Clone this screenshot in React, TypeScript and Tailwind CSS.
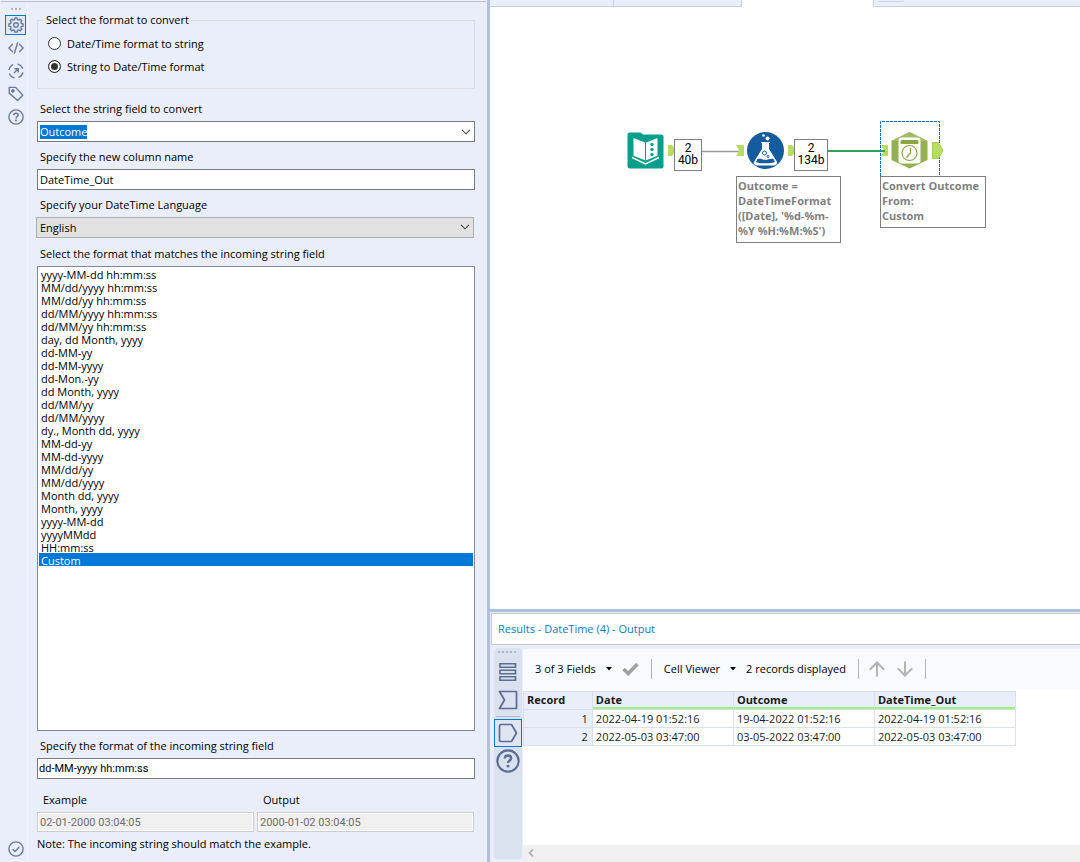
import React from "react";

const FORMATS = [
  "yyyy-MM-dd hh:mm:ss",
  "MM/dd/yyyy hh:mm:ss",
  "MM/dd/yy hh:mm:ss",
  "dd/MM/yyyy hh:mm:ss",
  "dd/MM/yy hh:mm:ss",
  "day, dd Month, yyyy",
  "dd-MM-yy",
  "dd-MM-yyyy",
  "dd-Mon.-yy",
  "dd Month, yyyy",
  "dd/MM/yy",
  "dd/MM/yyyy",
  "dy., Month dd, yyyy",
  "MM-dd-yy",
  "MM-dd-yyyy",
  "MM/dd/yy",
  "MM/dd/yyyy",
  "Month dd, yyyy",
  "Month, yyyy",
  "yyyy-MM-dd",
  "yyyyMMdd",
  "HH:mm:ss",
  "Custom",
];

const COLUMNS = ["Date", "Outcome", "DateTime_Out"];

const RECORDS = [
  ["2022-04-19 01:52:16", "19-04-2022 01:52:16", "2022-04-19 01:52:16"],
  ["2022-05-03 03:47:00", "03-05-2022 03:47:00", "2022-05-03 03:47:00"],
];

// eight teeth, four corners each
const GEAR_POINTS = Array.from({ length: 8 }, (_, i) =>
  [
    [-15, 5.6],
    [-9, 7.2],
    [9, 7.2],
    [15, 5.6],
  ]
    .map(([offset, r]) => {
      const angle = ((i * 45 + offset) * Math.PI) / 180;
      return `${(8 + r * Math.cos(angle)).toFixed(2)},${(8 + r * Math.sin(angle)).toFixed(2)}`;
    })
    .join(" "),
).join(" ");

type IconProps = { children: React.ReactNode; className?: string };

function Icon({ children, className = "size-4" }: IconProps) {
  return (
    <svg
      viewBox="0 0 16 16"
      fill="none"
      stroke="currentColor"
      strokeWidth="1.4"
      aria-hidden="true"
      className={className}
    >
      {children}
    </svg>
  );
}

function HelpIcon({ className }: { className?: string }) {
  return (
    <Icon className={className}>
      <circle cx="8" cy="8" r="7.1" />
      <path d="M5.9 6.3c0-1.2.9-2 2.1-2s2.1.8 2.1 1.9c0 1.5-2.1 1.5-2.1 3.2" strokeWidth="1.6" />
      <path d="M8 10.6v1.6" strokeWidth="1.8" />
    </Icon>
  );
}

function SideButton({
  label,
  active,
  children,
}: {
  label: string;
  active?: boolean;
  children: React.ReactNode;
}) {
  return (
    <button
      type="button"
      aria-label={label}
      className={
        active
          ? "flex h-5 w-[21px] items-center justify-center border border-[#0078d7] bg-[#dfe8f6]"
          : "flex h-5 w-[21px] items-center justify-center"
      }
    >
      {children}
    </button>
  );
}

function SideBar() {
  return (
    <nav className="flex w-7 shrink-0 flex-col items-center gap-[3px] border-r border-[#f3f5fc] pt-[6px] pb-[3px] pl-1 text-[#6b7a99]">
      <svg viewBox="0 0 12 4" aria-hidden="true" className="h-1 w-3 fill-[#b4b4b4]">
        <path d="M1 0h2v2h-2zM5 0h2v2h-2zM9 0h2v2h-2z" />
      </svg>
      <SideButton label="Configuration" active>
        <Icon className="size-4 shrink-0">
          <polygon points={GEAR_POINTS} strokeLinejoin="round" />
          <circle cx="8" cy="8" r="2.3" />
        </Icon>
      </SideButton>
      <SideButton label="XML view">
        <Icon>
          <path d="M4.8 4 .9 8l3.9 4M11.2 4l3.9 4-3.9 4M9.8 2.2 6.2 13.8" />
        </Icon>
      </SideButton>
      <SideButton label="Navigation">
        <Icon>
          <path d="M9.6 1.1a7 7 0 0 1 5.1 4.7M14.9 9.4a7 7 0 0 1-4.4 5.1M6.6 14.9a7 7 0 0 1-5.2-4.5M1 7a7 7 0 0 1 4.2-5.4M6 10l4-4M6.4 5.7h3.9v3.9" />
        </Icon>
      </SideButton>
      <SideButton label="Annotation">
        <Icon>
          <path d="M1.2 1.4h6.4l7.2 7.8-5.2 5.3-8.4-7.4z" strokeLinejoin="round" />
          <circle cx="4.9" cy="4.9" r="1.1" fill="currentColor" />
        </Icon>
      </SideButton>
      <SideButton label="Help">
        <HelpIcon className="size-4" />
      </SideButton>
      <div className="mt-auto">
        <SideButton label="Status">
          <Icon>
            <circle cx="8" cy="8" r="7.1" />
            <path d="m4.6 8.2 2.4 2.3 4.4-4.6" />
          </Icon>
        </SideButton>
      </div>
    </nav>
  );
}

function Chevron() {
  return (
    <svg viewBox="0 0 10 6" fill="none" stroke="#444" aria-hidden="true" className="h-[6px] w-[10px]">
      <path d="m1 .8 4 4 4-4" strokeWidth="1.1" />
    </svg>
  );
}

function Radio({ label, defaultChecked }: { label: string; defaultChecked?: boolean }) {
  return (
    <label className="flex h-[23px] items-center gap-[6px]">
      <input
        type="radio"
        name="direction"
        defaultChecked={defaultChecked}
        className="size-[13px] appearance-none rounded-full border border-[#333] bg-white checked:bg-[#333] checked:shadow-[inset_0_0_0_2px_white]"
      />
      {label}
    </label>
  );
}

function Field({
  id,
  label,
  className = "",
  children,
}: {
  id: string;
  label: string;
  className?: string;
  children: React.ReactNode;
}) {
  return (
    <div className={`flex flex-col gap-1 ${className}`}>
      <label htmlFor={id} className="pl-[3px]">
        {label}
      </label>
      {children}
    </div>
  );
}

function ConfigForm() {
  const fieldRef = React.useRef<HTMLInputElement>(null);

  React.useEffect(() => {
    fieldRef.current?.focus();
    fieldRef.current?.select();
  }, []);

  return (
    <form className="flex min-w-0 flex-1 flex-col gap-[7px] pt-[10px] pr-[11px] pb-[10px] pl-[9px]">
      <fieldset className="mb-[5px] border border-[#dcdcdc] pb-[10px] pl-[10px]">
        <legend className="-ml-1 px-[2px]">Select the format to convert</legend>
        <div className="pt-1">
          <Radio label="Date/Time format to string" />
          <Radio label="String to Date/Time format" defaultChecked />
        </div>
      </fieldset>

      <Field id="field" label="Select the string field to convert">
        <div className="flex h-[21px] items-center border border-[#7a7a7a] bg-white pr-[3px] pl-[2px]">
          <input
            id="field"
            ref={fieldRef}
            defaultValue="Outcome"
            className="h-[14px] min-w-0 flex-1 leading-[14px] outline-none selection:bg-[#0078d7] selection:text-white"
          />
          <button type="button" aria-label="Show fields">
            <Chevron />
          </button>
        </div>
      </Field>

      <Field id="column" label="Specify the new column name">
        <input
          id="column"
          defaultValue="DateTime_Out"
          className="h-[21px] border border-[#7a7a7a] bg-white px-[2px] outline-none"
        />
      </Field>

      <Field id="language" label="Specify your DateTime Language">
        <div className="relative -ml-px mr-px flex">
          <select
            id="language"
            className="h-[21px] w-full appearance-none border border-[#adadad] bg-[#e1e1e1] pl-[3px] outline-none"
          >
            <option>English</option>
          </select>
          <span className="pointer-events-none absolute top-[7px] right-1">
            <Chevron />
          </span>
        </div>
      </Field>

      <Field
        id="format"
        label="Select the format that matches the incoming string field"
        className="mt-px flex-1"
      >
        <select
          id="format"
          size={23}
          defaultValue="Custom"
          className="flex-1 border border-[#828790] bg-white px-px outline-none"
        >
          {FORMATS.map((format) => (
            <option
              key={format}
              className="h-[13px] min-h-0 p-0 pl-[2px] leading-[13px] checked:bg-[#0078d7] checked:bg-linear-to-r checked:from-[#0078d7] checked:to-[#0078d7] checked:text-white"
            >
              {format}
            </option>
          ))}
        </select>
      </Field>

      <Field id="custom" label="Specify the format of the incoming string field">
        <input
          id="custom"
          defaultValue="dd-MM-yyyy hh:mm:ss"
          className="h-[21px] border border-[#7a7a7a] bg-white px-px font-[Roboto,sans-serif] outline-none"
        />
      </Field>

      <div className="mt-[6px] mr-px flex gap-[3px]">
        {[
          { id: "example", label: "Example", value: "02-01-2000 03:04:05" },
          { id: "output", label: "Output", value: "2000-01-02 03:04:05" },
        ].map(({ id, label, value }) => (
          <div key={id} className="flex min-w-0 flex-1 flex-col gap-1">
            <label htmlFor={id} className="pl-[6px]">
              {label}
            </label>
            <input
              id={id}
              value={value}
              disabled
              className="h-5 border border-[#ccc] bg-[#f0f0f0] px-[2px] font-[Roboto,sans-serif] text-[#6d6d6d] inset-ring inset-ring-white"
            />
          </div>
        ))}
      </div>
      <p className="-mt-[3px]">Note: The incoming string should match the example.</p>
    </form>
  );
}

function RecordCount({ count, size, className }: { count: number; size: string; className: string }) {
  return (
    <div
      className={`absolute top-[139px] h-8 border border-[#7f7f7f] bg-white pt-[2px] text-center font-[Roboto,sans-serif] text-xs leading-3 text-black ${className}`}
    >
      {count}
      <br />
      {size}
    </div>
  );
}

function Canvas() {
  return (
    <section aria-label="Workflow" className="relative min-h-64 flex-1 overflow-hidden bg-white">
      <div className="flex h-[7px]">
        <div className="w-[124px] border-r border-b border-[#c6d0e8] bg-[#eaeefa]" />
        <div className="w-32 border-r border-b border-[#c6d0e8] bg-[#eaeefa]" />
        <div className="w-[131px]" />
        <div className="flex-1 border-b border-l border-[#c6d0e8] bg-[#eaeefa] pl-1">
          <div className="h-[2px] w-[26px] rounded-b border-b border-[#ccd2e4]" />
        </div>
      </div>

      <svg
        width="330"
        height="60"
        viewBox="627 120 330 60"
        aria-hidden="true"
        className="absolute top-[120px] left-[137px]"
      >
        <path d="M702 151.5h38" stroke="#999" strokeWidth="1.4" />
        <path d="M828 151h56" stroke="#2fa35b" strokeWidth="2" />
        <path d="M880.5 176v-54.5h59V176" fill="none" stroke="#0a74c9" strokeDasharray="3 1" />
        <g fill="#b8dc62">
          <path d="M668 145h4l2 2.5v6l-2 2.5h-4zM736 145h8v11h-8l3-5.5zM788 145h4l2 2.5v6l-2 2.5h-4zM881 145h7v11h-7l3-5.5z" />
          <path d="M932.5 142.500h6l4.500 8-4.500 8h-6z" stroke="#a3cf4c" />
        </g>
        <path d="M881 151h4" stroke="#2fa35b" strokeWidth="2" />

        {/* input tool */}
        <path d="M629.5 132.5h11l2.500 2h18a2.500 2.500 0 0 1 2.500 2.500v29a2.500 2.500 0 0 1-2.500 2.500h-31a2.500 2.500 0 0 1-2.500-2.500v-31.500a2 2 0 0 1 2-2z" fill="#069f8c" />
        <path d="m633.5 138 12 4.700v17.800l-12-4.800zM657.500 138l-12 4.700v17.800l12-4.800z" fill="#fff" />
        <path d="M645.5 142.500v18" stroke="#069f8c" />
        <path d="M632 157.500 645.500 164l13.500-6.500" fill="none" stroke="#fff" strokeWidth="1.4" />
        <g fill="#069f8c">
          <circle cx="652" cy="144.500" r="1.700" />
          <circle cx="652" cy="149.500" r="1.700" />
          <circle cx="652" cy="154.500" r="1.700" />
        </g>

        {/* formula tool */}
        <circle cx="765.5" cy="150.500" r="18.500" fill="#145c9e" />
        <path d="M761.5 142.500h8M762.500 143v6l-7.500 12c-1.500 2.500-.5 4 2 4h17c2.500 0 3.500-1.500 2-4l-7.500-12v-6z" fill="#fff" stroke="#fff" strokeLinecap="round" />
        <path d="M757.5 159c3-1 5 .8 8 .8s5-1.800 8-.8l1.500 3c-3 1.800-16 1.800-19 0z" fill="#145c9e" />
        <g fill="none" stroke="#145c9e">
          <circle cx="764.5" cy="153" r="2" />
          <circle cx="768" cy="156.500" r="1" />
        </g>
        <circle cx="763.5" cy="135.500" r="1.300" fill="#fff" />
        <circle cx="767.5" cy="138.500" r="2" fill="#fff" />

        {/* date time tool */}
        <path d="m909.5 132 18 9v19l-18 8.500-18-8.500v-19z" fill="#95b051" />
        <path d="m909.5 132 18 9h-36z" fill="#a3bb66" />
        <rect x="898.5" y="137.500" width="22" height="26" rx="3" fill="#fff" />
        <rect x="900.5" y="140" width="18" height="4" rx="1.500" fill="#8ca646" />
        <circle cx="909.5" cy="153" r="7.500" fill="#fff" stroke="#8ca646" strokeWidth="1.200" />
        <path d="M910.5 148v5l-4 4.500" fill="none" stroke="#8ca646" strokeWidth="1.200" />
      </svg>

      <RecordCount count={2} size="40b" className="left-[184px] w-7" />
      <RecordCount count={2} size="134b" className="left-[304px] w-[34px]" />

      <div className="absolute top-[176px] left-[246px] w-[105px] border border-[#7f7f7f] bg-white px-px pt-px pb-1 leading-[15px] font-bold whitespace-nowrap text-[#7f7f7f]">
        Outcome =
        <br />
        DateTimeFormat
        <br />
        ([Date], '%d-%m-
        <br />
        %Y %H:%M:%S')
      </div>
      <div className="absolute top-[176px] left-[390px] w-[106px] border border-[#7f7f7f] bg-white px-px pt-px pb-1 leading-[15px] font-bold whitespace-nowrap text-[#7f7f7f]">
        Convert Outcome
        <br />
        From:
        <br />
        Custom
      </div>
    </section>
  );
}

function ResultsSideBar() {
  return (
    <nav className="my-[3px] flex w-7 shrink-0 flex-col items-center rounded bg-[#dae1ef] pt-[3px] text-[#5c6c92]">
      <svg viewBox="0 0 20 3" aria-hidden="true" className="h-[3px] w-5 fill-[#b0b4bc]">
        <path d="M0 0h2v2h-2zM4 0h2v2h-2zM8 0h2v2h-2zM12 0h2v2h-2zM16 0h2v2h-2z" />
      </svg>
      <button type="button" aria-label="Messages" className="mt-2">
        <svg viewBox="0 0 18 20" fill="none" stroke="currentColor" strokeWidth="1.6" className="h-5 w-[18px]">
          <path d="M1 1.8h15.500v3.400H1zM1 8.300h15.500v3.400H1zM1 14.800h15.500v3.400H1z" />
        </svg>
      </button>
      <button type="button" aria-label="Input anchor" className="mt-2 mb-[6px]">
        <svg viewBox="0 0 20 20" fill="none" stroke="currentColor" strokeWidth="1.700" className="size-5">
          <path d="M1.5 1.500h17v17h-17l5-8.500z" strokeLinejoin="round" />
        </svg>
      </button>
      <div className="h-px w-6 bg-[#b4b9c4]" />
      <button
        type="button"
        aria-label="Output anchor"
        className="mt-[2px] flex size-7 items-center justify-center border border-[#0078d7] bg-[#dfe6f2]"
      >
        <svg viewBox="0 0 20 20" fill="none" stroke="currentColor" strokeWidth="1.700" className="size-5">
          <path d="M3 1.500h10.500l5 8.500-5 8.500H3a1.500 1.500 0 0 1-1.500-1.500V3A1.500 1.500 0 0 1 3 1.500z" strokeLinejoin="round" />
        </svg>
      </button>
      <button type="button" aria-label="Help" className="mt-[2px]">
        <HelpIcon className="size-6" />
      </button>
    </nav>
  );
}

function Caret() {
  return (
    <svg viewBox="0 0 6 4" aria-hidden="true" className="h-1 w-[6px]">
      <path d="M0 0h6L3 3.500z" />
    </svg>
  );
}

function ResultsToolBar() {
  return (
    <div className="flex h-10 items-center bg-[#f7faff] pl-3 whitespace-nowrap">
      <button type="button" className="flex items-center gap-[10px]">
        3 of 3 Fields <Caret />
      </button>
      <button type="button" aria-label="Apply" className="ml-[10px]">
        <svg viewBox="0 0 17 14" fill="none" stroke="#a0a0a0" strokeWidth="3.600" className="h-[14px] w-[17px]">
          <path d="m1.5 7 4.700 4.500L15.500 2" />
        </svg>
      </button>
      <div className="mx-3 h-5 w-px bg-[#b5b5b5]" />
      <button type="button" className="flex items-center gap-[10px]">
        Cell Viewer <Caret />
      </button>
      <span className="ml-[10px]">2 records displayed</span>
      <div className="mr-[10px] ml-3 h-5 w-px bg-[#b5b5b5]" />
      <button type="button" aria-label="Previous record">
        <svg viewBox="0 0 16 16" fill="none" stroke="#b3b3b3" strokeWidth="2" className="size-4">
          <path d="M8 15.500V1.500M.8 8.700 8 1.500l7.200 7.200" />
        </svg>
      </button>
      <button type="button" aria-label="Next record" className="ml-3">
        <svg viewBox="0 0 16 16" fill="none" stroke="#b3b3b3" strokeWidth="2" className="size-4">
          <path d="M8 .5v14M.8 7.300 8 14.500l7.200-7.200" />
        </svg>
      </button>
      <div className="ml-3 h-5 w-px bg-[#b5b5b5]" />
    </div>
  );
}

function ResultsTable() {
  return (
    <table className="mt-[2px] w-[88.5%] table-fixed border-collapse text-[#1a1a1a]">
      <thead>
        <tr className="h-[18px] bg-[#eaeefa] text-left">
          <th className="w-[14%] border border-[#d9e1ef] p-0 pb-px pl-[3px] leading-4">Record</th>
          {COLUMNS.map((column) => (
            <th
              key={column}
              className="border border-[#d9e1ef] p-0 pb-px pl-[3px] leading-4 shadow-[inset_0_-2px_0_#98f27c]"
            >
              {column}
            </th>
          ))}
        </tr>
      </thead>
      <tbody>
        {RECORDS.map((record, i) => (
          <tr key={i} className="h-[18px]">
            <td className="border border-[#d9e1ef] bg-[#eaeefa] p-0 pr-1 text-right leading-4">
              {i + 1}
            </td>
            {record.map((value, j) => (
              <td key={j} className="border border-[#d9e1ef] bg-white p-0 pl-[3px] leading-4">
                {value}
              </td>
            ))}
          </tr>
        ))}
      </tbody>
    </table>
  );
}

function Results() {
  return (
    <section aria-label="Results" className="flex h-[253px] shrink-0 flex-col border-t-[3px] border-[#b0bfdf] bg-[#eaeefa]">
      <h2 className="mt-px ml-px border border-r-0 border-[#c6c6c6] bg-white py-[7px] pl-[6px] text-[#0d7cc4]">
        Results - DateTime (4) - Output
      </h2>
      <div className="flex min-h-0 flex-1 pl-1">
        <ResultsSideBar />
        <div className="mt-1 mb-px ml-px flex min-w-0 flex-1 flex-col bg-white">
          <ResultsToolBar />
          <ResultsTable />
          <div className="mt-auto flex h-4 items-center bg-[#f0f0f0] pl-[5px]">
            <button type="button" aria-label="Scroll left">
              <svg viewBox="0 0 6 8" fill="none" stroke="#a6a6a6" strokeWidth="1.500" className="h-2 w-[6px]">
                <path d="M5 .5 1.500 4 5 7.500" />
              </svg>
            </button>
          </div>
        </div>
      </div>
    </section>
  );
}

export default function App() {
  return (
    <main className="flex min-h-screen bg-[#eaeefa] font-['Open_Sans',sans-serif] text-[11px] leading-4 text-black">
      <aside className="flex w-[45%] shrink-0 flex-col">
        <div className="ml-px h-[2px] border-b border-[#bdc3cd]" />
        <div className="flex flex-1">
          <SideBar />
          <ConfigForm />
        </div>
      </aside>
      <div className="w-1 shrink-0 border-l border-[#f0f0f0] bg-[#b0bfdf]" />
      <div className="flex min-w-0 flex-1 flex-col">
        <Canvas />
        <Results />
      </div>
    </main>
  );
}
